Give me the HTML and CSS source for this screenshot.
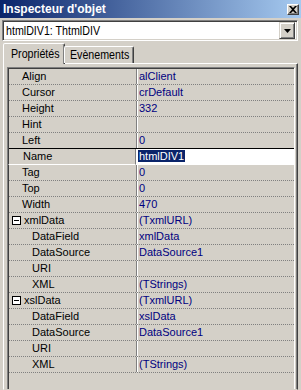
FILE: index.html
```html
<!DOCTYPE html>
<html>
<head>
<meta charset="utf-8">
<link rel="stylesheet" href="styles.css">
</head>
<body>
<div class="win">
  <div class="titlebar">
    <span class="title">Inspecteur d'objet</span>
    <span class="close"><svg width="8" height="7" viewBox="0 0 8 7"><path d="M0 0h2l2 2 2-2h2L5 3.5 8 7H6L4 5 2 7H0l3-3.5z" fill="#000"/></svg></span>
  </div>
  <div class="combo">
    <span class="combo-text"><span class="squeeze">htmlDIV1: ThtmlDIV</span></span>
    <span class="drop"><svg width="7" height="4" viewBox="0 0 7 4"><path d="M0 0h7L3.5 4z" fill="#000"/></svg></span>
  </div>
  <div class="tabs">
    <div class="tab active"><span class="squeeze">Propriétés</span></div>
    <div class="tab second"><span class="squeeze">Evènements</span></div>
  </div>
  <div class="page">
    <div class="grid">
      <div class="row"><div class="name">Align</div><div class="val">alClient</div></div>
      <div class="row"><div class="name">Cursor</div><div class="val">crDefault</div></div>
      <div class="row"><div class="name">Height</div><div class="val">332</div></div>
      <div class="row"><div class="name">Hint</div><div class="val"></div></div>
      <div class="row"><div class="name">Left</div><div class="val">0</div></div>
      <div class="row selected"><div class="name">Name</div><div class="val"><span class="hl">htmlDIV1</span></div></div>
      <div class="row"><div class="name">Tag</div><div class="val">0</div></div>
      <div class="row"><div class="name">Top</div><div class="val">0</div></div>
      <div class="row"><div class="name">Width</div><div class="val">470</div></div>
      <div class="row"><div class="name group"><span class="box"></span>xmlData</div><div class="val">(TxmlURL)</div></div>
      <div class="row"><div class="name sub">DataField</div><div class="val">xmlData</div></div>
      <div class="row"><div class="name sub">DataSource</div><div class="val">DataSource1</div></div>
      <div class="row"><div class="name sub">URI</div><div class="val"></div></div>
      <div class="row"><div class="name sub">XML</div><div class="val">(TStrings)</div></div>
      <div class="row"><div class="name group"><span class="box"></span>xslData</div><div class="val">(TxmlURL)</div></div>
      <div class="row"><div class="name sub">DataField</div><div class="val">xslData</div></div>
      <div class="row"><div class="name sub">DataSource</div><div class="val">DataSource1</div></div>
      <div class="row"><div class="name sub">URI</div><div class="val"></div></div>
      <div class="row"><div class="name sub">XML</div><div class="val">(TStrings)</div></div>
    </div>
  </div>
</div>
</body>
</html>
```
FILE: styles.css
```css
* { box-sizing: border-box; }
html, body { margin: 0; padding: 0; background: #d4d0c8; }
body { font-family: "Liberation Sans", Arial, sans-serif; font-size: 11px; color: #000; }

.win {
  width: 301px;
  height: 390px;
  background: #d4d0c8;
  display: flex;
  flex-direction: column;
  overflow: hidden;
}

.titlebar {
  height: 18px;
  flex: none;
  background: linear-gradient(to right, #0a246a, #a6caf0);
  display: flex;
  align-items: center;
  justify-content: space-between;
  padding: 0 2px 0 3px;
}
.title {
  color: #fff;
  font-weight: bold;
  font-size: 12px;
}
.close {
  width: 12px;
  height: 11px;
  background: #d4d0c8;
  border: 1px solid;
  border-color: #fff #404040 #404040 #fff;
  box-shadow: inset -1px -1px #808080;
  display: flex;
  align-items: center;
  justify-content: center;
  margin-top: 1px;
}

.squeeze {
  display: inline-block;
  font-size: 13px;
  transform: scaleX(0.82);
  transform-origin: 0 50%;
  white-space: nowrap;
}

.combo {
  flex: none;
  margin: 2px 3px 0 2px;
  height: 21px;
  background: #fff;
  border: 1px solid;
  border-color: #808080 #fff #fff #808080;
  box-shadow: inset 1px 1px #404040, inset -1px -1px #d4d0c8;
  display: flex;
  align-items: center;
  justify-content: space-between;
  padding: 2px;
}
.combo-text {
  flex: 1;
  padding-left: 1px;
  line-height: 15px;
  overflow: hidden;
}
.drop {
  flex: none;
  width: 16px;
  height: 17px;
  background: #d4d0c8;
  border: 1px solid;
  border-color: #d4d0c8 #404040 #404040 #d4d0c8;
  box-shadow: inset 1px 1px #fff, inset -1px -1px #808080;
  display: flex;
  align-items: center;
  justify-content: center;
}

.tabs {
  flex: none;
  display: flex;
  align-items: flex-end;
  height: 22px;
  padding-left: 3px;
  position: relative;
  z-index: 1;
}
.tab {
  height: 17px;
  width: 70px;
  padding-left: 5px;
  border: 1px solid;
  border-bottom: none;
  border-color: #fff #404040 transparent #fff;
  box-shadow: inset -1px 0 #808080;
  line-height: 16px;
  border-radius: 2px 2px 0 0;
  overflow: hidden;
}
.tab.active {
  height: 21px;
  width: 62px;
  padding-left: 7px;
  margin-bottom: -1px;
  margin-right: -1px;
  background: #d4d0c8;
  line-height: 19px;
}

.page {
  flex: 1;
  margin: 0 3px 0 3px;
  border: 1px solid;
  border-color: #fff #404040 transparent #fff;
  box-shadow: inset -1px 0 #808080;
  padding: 3px 2px 0 3px;
  display: flex;
  flex-direction: column;
}

.grid {
  flex: 1;
  border: 1px solid;
  border-bottom: none;
  border-color: #808080 #fff transparent #808080;
  box-shadow: inset 1px 1px #404040;
  padding: 1px 0 0 1px;
}

.row {
  display: flex;
  height: 16px;
  border-bottom: 1px dotted #808080;
}
.name {
  width: 128px;
  flex: none;
  padding-left: 13px;
  line-height: 15px;
  border-right: 1px solid #808080;
  white-space: nowrap;
}
.name.sub { padding-left: 23px; }
.name.group { padding-left: 3px; display: flex; align-items: center; }
.box {
  width: 9px;
  height: 9px;
  border: 1px solid #000;
  background: #fff;
  margin-right: 3px;
  position: relative;
}
.box::after {
  content: "";
  position: absolute;
  left: 1px;
  top: 3px;
  width: 5px;
  height: 1px;
  background: #000;
}
.val {
  flex: 1;
  padding-left: 1px;
  line-height: 15px;
  color: #000080;
  border-left: 1px solid #fff;
  white-space: nowrap;
}

.row.selected {
  border-bottom: none;
  border-top: 1px solid #000;
  height: 17px;
  margin-top: -1px;
}
.row.selected .name {
  border-left: 1px solid #404040;
  margin-left: -1px;
  padding-left: 14px;
  border-right: 1px solid #808080;
  border-bottom: 1px solid #fff;
}
.row.selected .val {
  background: #fff;
  color: #000;
  padding-left: 1px;
}
.hl {
  background: #0a246a;
  color: #fff;
  padding: 0 1px;
}
```
